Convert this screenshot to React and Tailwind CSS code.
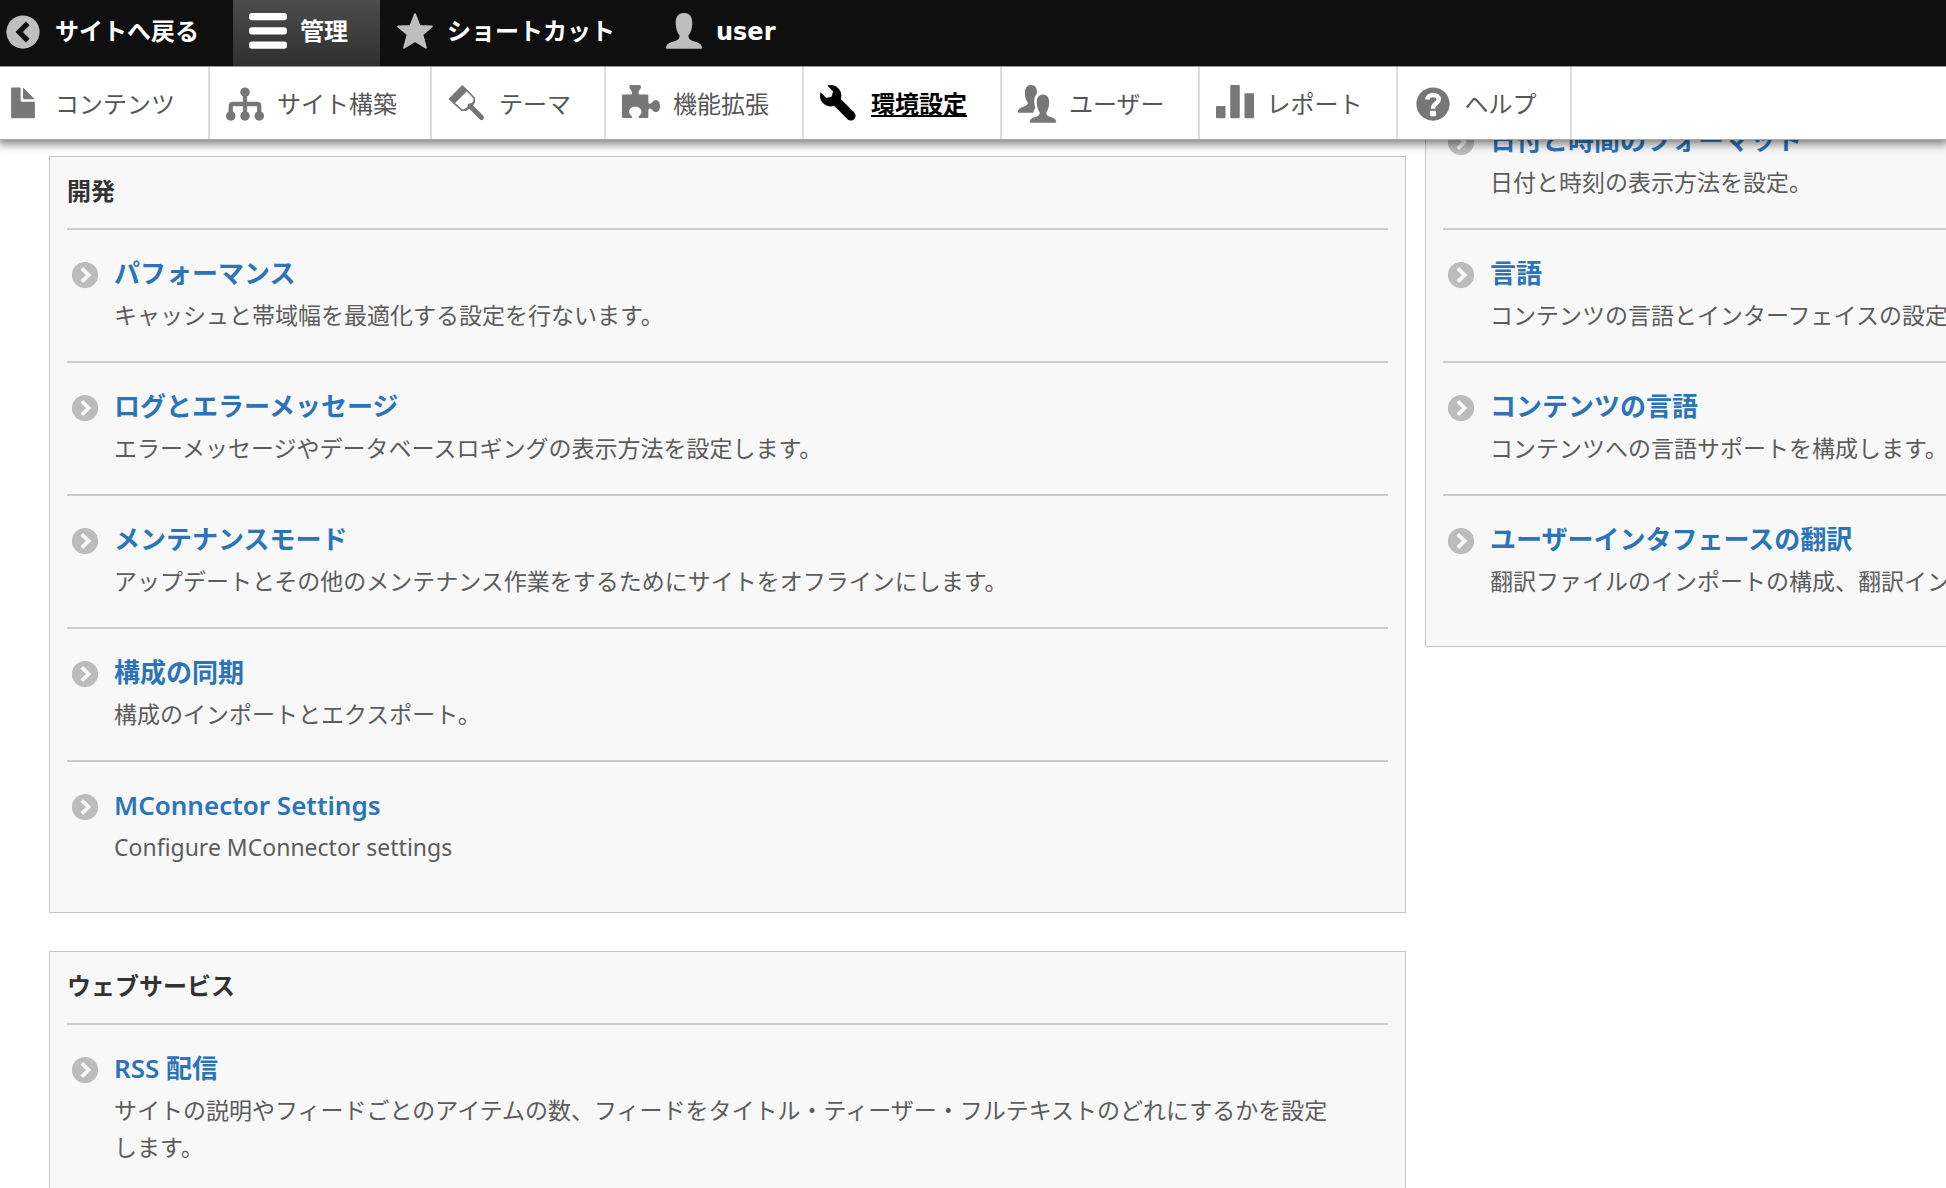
import React from "react";

const PERSON =
  "M8 0C10.6 0 11.6 2 11.5 4.5C11.4 6.8 10.8 8.2 9.9 9.4C9.8 10.5 10.2 11.2 11.5 11.7C14 12.5 15.5 13 15.5 14.6V15H.5V14.6C.5 13 2 12.5 4.5 11.7C5.8 11.2 6.2 10.5 6.1 9.4C5.2 8.2 4.6 6.8 4.5 4.5C4.4 2 5.4 0 8 0Z";

const icons = {
  back: (
    <>
      <circle cx="8" cy="8" r="7" />
      <path d="M10 4.4L6.4 8L10 11.6" fill="none" stroke="#0f0f0f" strokeWidth="2.2" />
    </>
  ),
  hamburger: (
    <>
      <rect width="16" height="3" rx="1.25" />
      <rect y="6" width="16" height="3" rx="1.25" />
      <rect y="12" width="16" height="3" rx="1.25" />
    </>
  ),
  star: (
    <path
      d="M8 .5L9.9 5.4L15.1 5.7L11.1 9.1L12.6 14.6L8 11.8L3.4 14.6L4.9 9.1L.9 5.7L6.1 5.4Z"
      stroke="currentColor"
      strokeWidth=".8"
      strokeLinejoin="round"
    />
  ),
  person: <path d={PERSON} />,
  file: (
    <path d="M12.502 7h-5c-.276 0-.502-.225-.502-.5v-5c0-.275-.225-.5-.5-.5h-3c-.275 0-.5.225-.5.5v12.029c0 .275.225.5.5.5h9.002c.275 0 .5-.225.5-.5v-6.029c0-.275-.225-.5-.5-.5zM8.502 6h4c.275 0 .34-.159.146-.354l-4.293-4.292c-.195-.195-.353-.129-.353.146v4c0 .275.225.5.5.5z" />
  ),
  structure: (
    <>
      <circle cx="8" cy="3" r="2" />
      <circle cx="2" cy="13" r="2" />
      <circle cx="8" cy="13" r="2" />
      <circle cx="14" cy="13" r="2" />
      <path d="M8 3V13M2 13V8.9Q2 8 2.9 8H13.1Q14 8 14 8.9V13" fill="none" stroke="currentColor" strokeWidth="1.8" />
    </>
  ),
  brush: (
    <>
      <path d="M6 0L.2 5.9L2.5 8.1L8.4 2.2Z" />
      <path d="M7.8 2.2L11 5.4V7L7.2 10.6H5.8L2.4 7.5" fill="none" stroke="currentColor" strokeWidth=".7" />
      <path d="M11.3 5.6V7.6L9.8 9.5L7.6 10.9H5.8L8.4 9.3L10.4 7.4Z" />
      <path d="M9.3 8.8L14.1 13.7" fill="none" stroke="currentColor" strokeWidth="2.1" strokeLinecap="round" />
    </>
  ),
  puzzle: (
    <path d="M0 4.5Q0 4 .5 4H3.6C4.4 4 4.4 3 3.9 2.3C3.4 1.6 3.1 1.2 3.1.7C3.1.2 3.5 0 4 0H7.2C7.7 0 8 .3 8 .8C8 1.3 7.6 1.7 7.2 2.3C6.8 3 6.9 4 7.6 4H10.6Q11.1 4 11.1 4.5V7.3C11.1 8 11.9 8.2 12.6 7.5C13 6.8 13.6 6.3 14.3 6.3C15.3 6.3 16 7.5 16 8.9S15.3 11.4 14.3 11.4C13.6 11.4 13 10.9 12.6 10.3C11.9 9.6 11.1 9.8 11.1 10.5V13.4Q11.1 13.9 10.6 13.9H7.4C6.9 13.9 6.8 13.4 7.2 13C7.8 12.6 8.2 12.1 8.2 11.3C8.2 10 7 9.2 5.6 9.2S3 10 3 11.3C3 12.1 3.4 12.6 4 13C4.4 13.4 4.3 13.9 3.8 13.9H.5Q0 13.9 0 13.4Z" />
  ),
  wrench: (
    <path d="M14.416 11.586l-5.666-5.665c.15-.449.252-.921.252-1.421 0-2.485-2.016-4.5-4.502-4.5-.505 0-.981.102-1.434.255l2.431 2.431-.588 2.196-2.196.588-2.445-2.445c-.162.464-.268.956-.268 1.475 0 2.486 2.014 4.5 4.5 4.5.5 0 .972-.102 1.421-.251l5.667 5.665c.781.781 2.047.781 2.828 0s.781-2.047 0-2.828z" />
  ),
  people: (
    <>
      <path d="M5.5 0C7.4 0 8.1 1.5 8 3.2C7.9 3.9 7.2 4.6 6.9 5.6C6.7 7.2 6.9 8.4 7.3 9.6C7 10.3 6.6 10.8 6.5 11.7H0V11.2C0 10 1 9.6 2.6 9C3.9 8.5 4.2 8.1 4.1 7.3C3.3 6.4 2.9 5.2 2.9 3.4C2.9 1.4 3.7 0 5.5 0Z" />
      <path d={PERSON} transform="translate(4.6 4) scale(.74 .79)" />
    </>
  ),
  chart: (
    <>
      <rect y="8.8" width="4" height="5.2" rx=".4" />
      <rect x="6" width="4" height="14" rx=".4" />
      <rect x="12" y="3.5" width="4" height="10.5" rx=".4" />
    </>
  ),
  help: (
    <>
      <circle cx="8" cy="8" r="7" />
      <path d="M5.7 6.1C5.7 3.6 10.4 3.6 10.4 6.1C10.4 7.8 8 7.7 8 10" fill="none" stroke="#fff" strokeWidth="1.9" />
      <rect x="6.7" y="10.8" width="2.6" height="2.4" rx=".6" fill="#fff" />
    </>
  ),
  chevron: (
    <>
      <circle cx="8" cy="8" r="7" />
      <path d="M6.3 4.5L9.9 8L6.3 11.5" fill="none" stroke="#f8f8f8" strokeWidth="2" />
    </>
  ),
};

function Icon({ name, className }) {
  return (
    <svg viewBox="0 0 16 16" fill="currentColor" aria-hidden="true" className={`shrink-0 overflow-visible ${className}`}>
      {icons[name]}
    </svg>
  );
}

const barItems = [
  { icon: "back", label: "サイトへ戻る", box: "pl-1 pr-[34px] text-[#bebebe]" },
  { icon: "hamburger", label: "管理", box: "pl-4 pr-8 text-white bg-linear-to-b from-[#4c4c4c] to-[#303030]" },
  { icon: "star", label: "ショートカット", box: "pl-4 pr-[34px] text-[#bebebe]" },
  { icon: "person", label: "user", box: "pl-4 pr-8 text-[#bebebe]" },
];

const trayItems = [
  { icon: "file", label: "コンテンツ" },
  { icon: "structure", label: "サイト構築" },
  { icon: "brush", label: "テーマ" },
  { icon: "puzzle", label: "機能拡張" },
  { icon: "wrench", label: "環境設定", active: true },
  { icon: "people", label: "ユーザー" },
  { icon: "chart", label: "レポート" },
  { icon: "help", label: "ヘルプ" },
];

const development = [
  ["パフォーマンス", "キャッシュと帯域幅を最適化する設定を行ないます。"],
  ["ログとエラーメッセージ", "エラーメッセージやデータベースロギングの表示方法を設定します。"],
  ["メンテナンスモード", "アップデートとその他のメンテナンス作業をするためにサイトをオフラインにします。"],
  ["構成の同期", "構成のインポートとエクスポート。"],
  ["MConnector Settings", "Configure MConnector settings"],
];

const webServices = [
  [
    "RSS 配信",
    "サイトの説明やフィードごとのアイテムの数、フィードをタイトル・ティーザー・フルテキストのどれにするかを設定します。",
  ],
];

const regional = [
  ["日付と時間のフォーマット", "日付と時刻の表示方法を設定。"],
  ["言語", "コンテンツの言語とインターフェイスの設定"],
  ["コンテンツの言語", "コンテンツへの言語サポートを構成します。"],
  ["ユーザーインタフェースの翻訳", "翻訳ファイルのインポートの構成、翻訳イン"],
];

function Entry({ title, text }) {
  return (
    <li className="flex gap-[14px] border-t-2 border-[#cccccc] pt-[22px] pb-[27px] last:pb-[46px]">
      <Icon name="chevron" className="mt-2 ml-[3px] size-[30px] text-[#bcbcbc]" />
      <div className="min-w-0 flex-1">
        <a href="#" className="block text-[26px] leading-[42px] font-semibold text-[#2b74b9]">
          {title}
        </a>
        <p className="mt-[3px] text-[23px] leading-[37px] text-[#5c5c5c]">{text}</p>
      </div>
    </li>
  );
}

function Panel({ heading, entries, className, listClassName = "" }) {
  return (
    <section className={`border border-[#c4c4c4] bg-[#f8f8f8] pl-[17px] ${className}`}>
      {heading && (
        <h2 className="pt-[14px] pb-[18px] text-[24px] leading-[39px] font-bold text-[#333333]">{heading}</h2>
      )}
      <ul className={listClassName}>
        {entries.map(([title, text]) => (
          <Entry key={title} title={title} text={text} />
        ))}
      </ul>
    </section>
  );
}

export default function App() {
  return (
    <div className="flex h-screen flex-col overflow-hidden bg-white font-['Noto_Sans','Noto_Sans_CJK_JP',sans-serif]">
      <header className="relative z-10 shrink-0 border-b border-[#aaaaaa] bg-white shadow-[0_2px_9px_2px_rgba(0,0,0,0.5)]">
        <nav className="flex h-[66px] bg-[#0f0f0f] font-['DejaVu_Sans','Noto_Sans_CJK_JP',sans-serif]">
          {barItems.map((item) => (
            <a key={item.label} href="#" className={`flex items-center gap-[13px] pb-[3px] ${item.box}`}>
              <Icon name={item.icon} className="size-[38px]" />
              <span className="text-[24px] leading-[38px] font-bold whitespace-nowrap text-white">{item.label}</span>
            </a>
          ))}
        </nav>
        <nav className="flex h-[73px] border-t border-[#999999]">
          {trayItems.map((item) => (
            <a
              key={item.label}
              href="#"
              className={`flex items-center gap-[13px] border-r-2 border-[#dddddd] pt-px pr-[33px] pl-4 first:pl-1 ${
                item.active ? "text-black" : "text-[#777777]"
              }`}
            >
              <Icon name={item.icon} className="size-[38px]" />
              <span
                className={`text-[24px] leading-[38px] whitespace-nowrap ${
                  item.active ? "font-bold text-black underline" : "text-[#565656]"
                }`}
              >
                {item.label}
              </span>
            </a>
          ))}
        </nav>
      </header>
      <main className="grid flex-1 grid-cols-[minmax(0,1fr)_521px] items-start gap-x-[19px] pt-4 pl-[49px]">
        <div className="flex flex-col gap-[38px]">
          <Panel heading="開発" entries={development} className="pr-[17px]" />
          <Panel
            heading="ウェブサービス"
            entries={webServices}
            className="pr-[17px]"
            listClassName="[&_p]:pr-10"
          />
        </div>
        <Panel entries={regional} className="-mt-[62px] border-r-0 whitespace-nowrap" />
      </main>
    </div>
  );
}
